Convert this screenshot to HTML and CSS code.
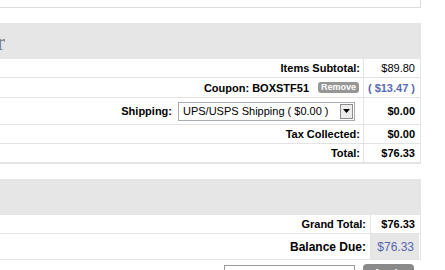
FILE: index.html
```html
<!DOCTYPE html>
<html>
<head>
<meta charset="utf-8">
<link rel="stylesheet" href="styles.css">
</head>
<body>
<div class="page">
  <div class="top-box"></div>

  <div class="section-head">
    <div class="title-clip"><span class="title">Order</span></div>
  </div>

  <div class="totals">
    <div class="row r1">
      <div class="label">Items Subtotal:</div>
      <div class="value plain">$89.80</div>
    </div>
    <div class="row r2">
      <div class="label">Coupon: BOXSTF51 <span class="remove">Remove</span></div>
      <div class="value discount">( $13.47 )</div>
    </div>
    <div class="row r3">
      <div class="label">Shipping:
        <div class="select" role="combobox">
          <span class="select-text">UPS/USPS Shipping ( $0.00 )</span>
          <span class="select-arrow"><svg width="7" height="4" viewBox="0 0 7 4"><path d="M0 0H7L3.5 4Z" fill="#000"/></svg></span>
        </div>
      </div>
      <div class="value">$0.00</div>
    </div>
    <div class="row r4">
      <div class="label">Tax Collected:</div>
      <div class="value">$0.00</div>
    </div>
    <div class="row r5 last">
      <div class="label">Total:</div>
      <div class="value">$76.33</div>
    </div>
  </div>

  <div class="section-head second"></div>

  <div class="grand">
    <div class="grow g1">
      <div class="label">Grand Total:</div>
      <div class="value">$76.33</div>
    </div>
    <div class="grow g2">
      <div class="label big">Balance Due:</div>
      <div class="value due">$76.33</div>
    </div>
  </div>

  <div class="pay-row">
    <div class="pay-input"></div>
    <div class="pay-btn">Apply</div>
  </div>
</div>
</body>
</html>
```

FILE: styles.css
```css
html, body {
  margin: 0;
  padding: 0;
  background: #fff;
}
body {
  font-family: "Liberation Sans", Arial, sans-serif;
  font-size: 11px;
  color: #000;
  overflow: hidden;
}
.page {
  width: 421px;
}
.top-box {
  height: 7px;
  width: 420px;
  border-right: 1px solid #dcdcdc;
  border-bottom: 1px solid #dcdcdc;
}
.section-head {
  margin-top: 15px;
  height: 36px;
  background: #e6e6e6;
  display: flex;
  align-items: center;
}
.section-head.second {
  margin-top: 15px;
}
.title-clip {
  width: 5px;
  display: flex;
  justify-content: flex-end;
  overflow: hidden;
  white-space: nowrap;
  margin-top: 2px;
}
.title {
  font-family: "Liberation Serif", "Times New Roman", serif;
  font-size: 24px;
  color: #7a7a7a;
  line-height: 28px;
}

.totals {
  border-bottom: 2px solid #e3e3e3;
}
.row {
  display: grid;
  grid-template-columns: 364px 55px;
  border-right: 1px solid #e3e3e3;
  border-bottom: 1px solid #e3e3e3;
  height: 18px;
}
.row .label {
  border-right: 1px solid #e3e3e3;
}
.row.r2 { height: 19px; }
.row.r3 { height: 26px; }
.row.last { border-bottom: none; height: 18px; }

.label {
  display: flex;
  justify-content: flex-end;
  align-items: center;
  padding-right: 3px;
  font-weight: bold;
  white-space: nowrap;
}
.value {
  display: flex;
  justify-content: flex-end;
  align-items: center;
  padding-right: 4px;
  font-weight: bold;
  white-space: nowrap;
}
.value.plain {
  font-weight: normal;
}
.value.discount {
  font-weight: bold;
  color: #5a6bb0;
}
.remove {
  display: inline-block;
  margin-left: 9px;
  width: 41px;
  height: 11px;
  line-height: 11px;
  border-radius: 3px;
  background: #979797;
  color: #fff;
  font-size: 9px;
  font-weight: bold;
  text-align: center;
  margin-right: 1px;
}
.select {
  margin-left: 6px;
  margin-right: 5px;
  width: 175px;
  height: 17px;
  border: 1px solid #a5acb2;
  display: flex;
  align-items: center;
  justify-content: space-between;
  font-weight: normal;
  background: #fff;
}
.select-text {
  padding-left: 4px;
}
.select-arrow {
  width: 11px;
  height: 13px;
  margin-right: 1px;
  border: 1px solid #8d8d8d;
  background: #ececec;
  display: flex;
  align-items: center;
  justify-content: center;
}

.grand {
  border-bottom: 1px solid #e3e3e3;
}
.grow {
  display: grid;
  grid-template-columns: 371px 48px;
  border-right: 1px solid #e3e3e3;
}
.grow .label {
  border-right: 1px solid #e3e3e3;
  padding-right: 4px;
}
.grow.g1 {
  height: 18px;
  border-bottom: 1px solid #e3e3e3;
}
.grow.g2 {
  height: 25px;
}
.label.big {
  font-size: 12px;
}
.value.due {
  background: #e6e6e6;
  font-weight: normal;
  font-size: 12px;
  color: #5566b0;
  padding-right: 5px;
}

.pay-row {
  display: flex;
  justify-content: flex-end;
  align-items: flex-start;
  gap: 8px;
  padding-right: 7px;
  padding-top: 5px;
}
.pay-input {
  width: 129px;
  height: 20px;
  border: 1px solid #9a9a9a;
  background: #fff;
}
.pay-btn {
  margin-top: -1px;
  width: 51px;
  height: 22px;
  border-radius: 4px;
  background: #8a8a8a;
  color: #fff;
  font-weight: bold;
  font-size: 11px;
  text-align: center;
  line-height: 18px;
}
```
